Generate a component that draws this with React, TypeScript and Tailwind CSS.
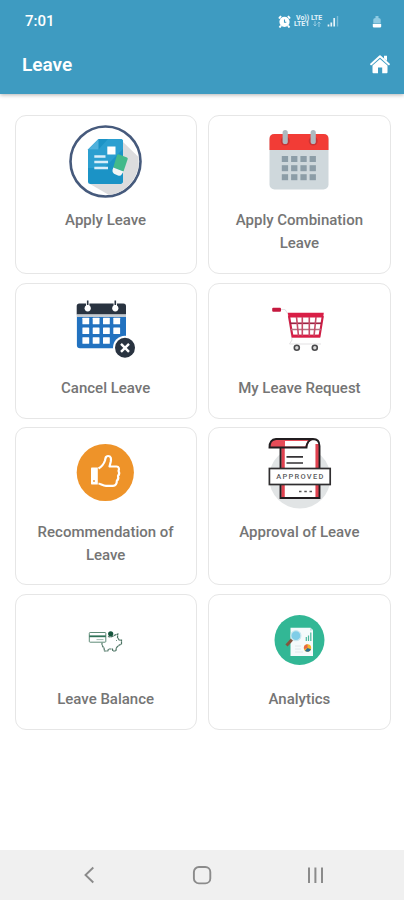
import * as React from 'react';

interface MenuItem {
  label: string;
  icon: React.ReactNode;
}

function ApplyIcon() {
  return (
    <svg viewBox="0 0 80 80" className="h-20 w-20">
      <circle cx="39.5" cy="39.5" r="35" fill="#fff" stroke="#465a7c" strokeWidth="2.6" />
      <path d="M57 20 L72.5 35 A33.700 33.700 0 0 1 43 73 L24 62 H57Z" fill="#dcdcde" />
      <path d="M32.5 17H54.5Q57 17 57 19.500V59.500Q57 62 54.500 62H24.500Q22 62 22 59.500V27.500Z" fill="#1b93c6" />
      <path d="M32.500 27.500L42 17H54.500Q57 17 57 19.500V27L38 46H22V27.500Z" fill="#2b9fd0" />
      <path d="M32.500 17V27.500H22Z" fill="#51b1dc" />
      <rect x="41.300" y="24.500" width="8.200" height="8" fill="#fff" />
      <path d="M28.300 34.500H39.500M28.300 40H42M28.300 46H42" stroke="#d9eef9" strokeWidth="2.400" />
      <path d="M52.500 32.200L61 35.400Q62 36 61.700 37L57.500 49.500L47.300 45.500L51 33Q51.500 32 52.500 32.200Z" fill="#43b98a" />
      <path d="M47.300 45.500L57.500 49.500L55.800 52.200Q54.500 54.500 52 53.500L48 51.800Q46 50.500 46.500 48Z" fill="#f3f5f5" />
    </svg>
  );
}

function CalendarIcon() {
  return (
    <svg viewBox="0 0 80 80" className="h-20 w-20">
      <rect x="10.500" y="12" width="59" height="55.500" rx="5" fill="#cfd8dc" />
      <path d="M10.500 28V17Q10.500 12 15.500 12H64.500Q69.500 12 69.500 17V28Z" fill="#f23c36" />
      {[26.200, 54.200].map((x) => (
        <g key={x}>
          <circle cx={x} cy="19" r="4.500" fill="#c93434" />
          <rect x={x - 2.600} y="8" width="5.200" height="14" rx="2.600" fill="#aebac0" />
        </g>
      ))}
      {[34, 43.200, 52.200].map((y) =>
        [22.800, 32.100, 41.400, 50.600].map((x) => (
          <rect key={`${x}-${y}`} x={x} y={y} width="6.300" height="6" fill="#8c9da7" />
        ))
      )}
    </svg>
  );
}

function CancelIcon() {
  return (
    <svg viewBox="0 0 80 80" className="h-20 w-20">
      <path d="M10.700 24.500V16Q10.700 13.400 13.300 13.400H57.400Q60 13.400 60 16V24.500Z" fill="#293340" />
      <rect x="10.700" y="24.500" width="49.300" height="2.500" fill="#c3c9d0" />
      <path d="M10.900 27H60V58.200H14Q10.900 58.200 10.900 55Z" fill="#2272c0" />
      {[21.700, 49.300].map((x) => (
        <g key={x}>
          <circle cx={x} cy="18.300" r="3.100" fill="#fff" />
          <path d={`M${x} 11V18`} stroke="#fff" strokeWidth="3.400" />
          <path d={`M${x} 10.500V15`} stroke="#293340" strokeWidth="1.600" />
        </g>
      ))}
      {[27.800, 37.500, 47.200].map((y, row) =>
        [16.400, 26.700, 37, 47.300].map((x, col) =>
          row === 2 && col === 3 ? null : (
            <rect key={`${x}-${y}`} x={x} y={y} width="6.800" height="6.500" rx="0.500" fill="#fff" />
          )
        )
      )}
      <circle cx="59" cy="57.800" r="12" fill="#fff" />
      <circle cx="59" cy="57.800" r="10" fill="#293340" />
      <path d="M55 53.800L63 61.800M63 53.800L55 61.800" stroke="#fff" strokeWidth="2.400" />
    </svg>
  );
}

function CartIcon() {
  return (
    <svg viewBox="0 0 80 80" className="h-20 w-20" fill="none">
      <path d="M21 19.500H26L29 24L33 50L30.500 54H62" stroke="#e3e1e3" strokeWidth="1" />
      <rect x="13.200" y="17.800" width="8.800" height="4" rx="1" fill="#c5193f" />
      <path d="M28.800 22.800H64.800L64.200 27.500H29.500Z" fill="#d91e46" />
      <path d="M30 26L33.500 46.500H60.500L63.800 26" stroke="#cf1f46" strokeWidth="2.100" />
      <path d="M31 33.300H62.500" stroke="#9b2444" strokeWidth="1.700" />
      <path d="M32 39.500H61.800" stroke="#b47484" strokeWidth="1.500" />
      <path d="M33 46H61" stroke="#d91e46" strokeWidth="2.800" />
      <path d="M37.500 27L39.500 46M43.300 27V46M50.300 27V46M57 27L55 46" stroke="#c64a66" strokeWidth="1.600" />
      {[37.800, 55.800].map((x) => (
        <circle key={x} cx={x} cy="57.800" r="2.500" fill="#d8d8d8" stroke="#4a4a4c" strokeWidth="1.600" />
      ))}
    </svg>
  );
}

function ThumbIcon() {
  return (
    <svg viewBox="0 0 80 80" className="h-20 w-20" fill="none">
      <circle cx="39.300" cy="38.500" r="28.600" fill="#ee9329" />
      <path d="M25.700 33.500H31.800V50.500H25.700Q25 50.500 25 49.500V34.500Q25 33.500 25.700 33.500Z" fill="#fff" />
      <circle cx="28" cy="47" r="0.900" fill="#ee9329" />
      <path
        d="M32.500 34.500C36 32.500 38 29.500 39 26.500C39.500 23.500 39.800 22 42 22C45 22 45.300 24.500 44.800 27.500L43.500 32.500H50.500C53 32.500 53.500 35 52.500 37C53.500 38.500 53.300 40.500 52 42C52.700 44 52 45.800 50.800 46.800C51 49.500 49.500 51.800 47 51.800H40C37 51.800 35 50 32.500 49.500"
        stroke="#fff"
        strokeWidth="2.200"
        strokeLinejoin="round"
      />
    </svg>
  );
}

function ApprovedIcon() {
  return (
    <svg viewBox="0 0 80 80" className="h-20 w-20" fill="none">
      <circle cx="40.800" cy="43.800" r="30.700" fill="#e1e4e5" />
      <path d="M21 7H54Q60.500 7 60.500 13V64H21Z" fill="#fff" />
      <path d="M24 14V64M58.200 10V64" stroke="#e0414f" strokeWidth="3.500" />
      <path d="M16 5.300H55Q49 7 48 13H11Q11 6 16 5.300Z" fill="#e64c58" />
      <path d="M26 7H49L46 12.500H26Z" fill="#fff" />
      <path d="M21.500 13.500V64H60.500V12Q60.500 5 54 5H17Q10.500 5.500 10.500 13.500H47.500Q48 6 54 5" stroke="#211d20" strokeWidth="1.900" />
      <path d="M27.500 22.800H44M27.500 29H44" stroke="#343234" strokeWidth="1.700" />
      <rect x="10.400" y="34.500" width="60.800" height="16" fill="#fff" stroke="#302e30" strokeWidth="1.700" />
      <text
        x="40.800"
        y="45.200"
        textAnchor="middle"
        textLength="47"
        fontSize="7.500"
        fontWeight="500"
        fontFamily="Roboto, sans-serif"
        fill="#5b5b5e"
      >
        APPROVED
      </text>
      <path d="M40 57.500H42.500M45.300 57.500H47.800M50.500 57.500H53" stroke="#555" strokeWidth="1.600" />
    </svg>
  );
}

function BalanceIcon() {
  return (
    <svg viewBox="0 0 80 80" className="h-20 w-20" fill="none">
      <rect x="23.300" y="31.500" width="16.500" height="9.700" rx="0.800" fill="#fff" stroke="#5f8b78" strokeWidth="1" />
      <path d="M23.300 35.300H39.800" stroke="#2f7257" strokeWidth="1.800" />
      <path d="M30.500 38.600H37.500" stroke="#8daa9e" strokeWidth="0.800" />
      <path
        d="M42 35.500C44 36.500 47 35.500 48.500 34.300L51.800 33L51.500 36.500L53.300 39.200H55.500V43L53 44.300L50.500 46.500L49.800 50H46.800L46.500 48H42.500L41.800 50H38.500L38 47C36.300 45.500 35.800 43.500 36 41.800"
        stroke="#4d7464"
        strokeWidth="1.200"
        strokeDasharray="2.600 0.400"
      />
      <circle cx="44.700" cy="32.800" r="2.600" fill="#17563d" />
      <circle cx="50.500" cy="39.500" r="0.500" fill="#4d7464" />
    </svg>
  );
}

function AnalyticsIcon() {
  return (
    <svg viewBox="0 0 80 80" className="h-20 w-20" fill="none">
      <circle cx="40.500" cy="39" r="25" fill="#32b795" />
      <path d="M31.500 26.700H51.500L54 29V55H31.500Z" fill="#f5fafb" />
      <path d="M51 26.700V29.500H54Z" fill="#c4dfe1" />
      <path d="M47.300 40V36M49.500 40V34.500M51.800 40V31.500" stroke="#4ab79c" strokeWidth="1.200" />
      <path d="M36 45H42M36 48H42M36 51H44" stroke="#dce5e8" strokeWidth="0.900" />
      <circle cx="48.500" cy="47" r="3.700" fill="#f3b62e" />
      <path d="M48.500 47V43.300A3.700 3.700 0 0 0 45 48Z" fill="#e76647" />
      <path d="M48.500 47L52 48.200A3.700 3.700 0 0 1 46 49.800Z" fill="#296d92" />
      <path d="M33 38.500L27.500 44.500" stroke="#84543d" strokeWidth="3" />
      <circle cx="36.900" cy="34.700" r="5" fill="#80cde7" stroke="#c9e7ef" strokeWidth="1.200" />
    </svg>
  );
}

const items: MenuItem[] = [
  { label: 'Apply Leave', icon: <ApplyIcon /> },
  { label: 'Apply Combination Leave', icon: <CalendarIcon /> },
  { label: 'Cancel Leave', icon: <CancelIcon /> },
  { label: 'My Leave Request', icon: <CartIcon /> },
  { label: 'Recommendation of Leave', icon: <ThumbIcon /> },
  { label: 'Approval of Leave', icon: <ApprovedIcon /> },
  { label: 'Leave Balance', icon: <BalanceIcon /> },
  { label: 'Analytics', icon: <AnalyticsIcon /> },
];

function StatusBar() {
  return (
    <div className="flex h-[42px] items-center pl-[25px] pr-[22px]">
      <span className="pt-[1px] text-[15px] font-medium leading-none">7:01</span>
      <div className="ml-auto flex items-center">
        {/* Alarm */}
        <svg viewBox="0 0 13 13" className="h-[13px] w-[13px]" fill="none">
          <path d="M1 3.500L3 1M12 3.500L10 1M3 10.500L1.500 12.500M10 10.500L11.500 12.500" stroke="#fff" strokeWidth="2" />
          <circle cx="6.500" cy="6.800" r="5.100" fill="#fff" />
          <path d="M6.500 4.500V7.200H8.300" stroke="#3e9bc1" strokeWidth="1.100" />
        </svg>
        <div className="ml-[3px] flex w-[31px] flex-col text-[7px] font-bold leading-[6.500px] text-[#e4f3fa]">
          <span className="whitespace-nowrap pl-[2px]">Vo)) LTE</span>
          <span className="flex items-center whitespace-nowrap">
            LTE1
            <svg viewBox="0 0 8 6" className="ml-[4px] h-[6px] w-[8px]" fill="none" stroke="#94cbe2" strokeWidth="1">
              <path d="M2 0V5M0.500 3.500L2 5L3.500 3.500M6 6V1M4.500 2.500L6 1L7.500 2.500" />
            </svg>
          </span>
        </div>
        <svg viewBox="0 0 12 12" className="ml-[2px] h-3 w-3" fill="none">
          <path d="M1.500 11.500V9.500M4.300 11.500V7.500M7.200 11.500V3" stroke="#e8f5fa" strokeWidth="1.700" />
          <path d="M10.500 11.500V1" stroke="#7dbdd8" strokeWidth="1.400" />
        </svg>
        {/* Battery */}
        <svg viewBox="0 0 10 13" className="ml-[33px] h-[13px] w-[10px]">
          <path d="M1.300 8V4.500Q1.300 3 3.500 3V1H6.500V3Q8.700 3 8.700 4.500V8Z" fill="#8fcbe3" />
          <rect x="0.800" y="8.700" width="8.400" height="3.700" rx="0.800" fill="#fff" />
        </svg>
      </div>
    </div>
  );
}

function Header() {
  return (
    <header className="relative z-10 h-[94px] bg-[#3e9bc1] text-white shadow-[0_1px_4px_rgba(0,0,0,0.3)]">
      <StatusBar />
      <div className="flex h-[44px] items-center justify-between pl-[22px] pr-[14px]">
        <h1 className="text-[19px] font-semibold leading-none">Leave</h1>
        <svg viewBox="0 0 20 20" className="h-5 w-5" fill="none">
          <path d="M14 1.700H17V7L14 4.500Z" fill="#fff" />
          <path d="M1.200 10.200L10 2.300L18.800 10.200" stroke="#fff" strokeWidth="2.100" strokeLinecap="round" strokeLinejoin="round" />
          <path d="M10 4.900L17.500 11.500V18.300Q17.500 19.200 16.600 19.200H12.200V13.500H8V19.200H3.400Q2.500 19.200 2.500 18.300V11.500Z" fill="#fff" />
        </svg>
      </div>
    </header>
  );
}

function MenuCard({ label, icon }: MenuItem) {
  return (
    <button className="flex flex-col items-center rounded-[11px] border border-[#e6e6e6] bg-white px-4 pt-[6px]">
      {icon}
      <span className="mt-[7px] text-[15px] font-medium leading-[22.500px] text-[#757575]">
        {label}
      </span>
    </button>
  );
}

function NavBar() {
  return (
    <nav className="flex h-[50px] items-center bg-[#f0f0f0] pl-[79px] pr-[79px]">
      <div className="flex flex-1 items-center justify-between">
        <svg viewBox="0 0 20 20" className="h-5 w-5" fill="none" stroke="#8b8b8b" strokeWidth="1.900">
          <path d="M14.300 2.500L6.500 10L14.300 17.500" />
        </svg>
        <svg viewBox="0 0 20 20" className="h-5 w-5" fill="none" stroke="#8b8b8b" strokeWidth="1.900">
          <rect x="1.900" y="2" width="16.400" height="16.400" rx="5" />
        </svg>
        <svg viewBox="0 0 20 20" className="h-5 w-5" fill="none" stroke="#8b8b8b" strokeWidth="2">
          <path d="M4 2.500V18M10.400 2.500V18M17 2.500V18" />
        </svg>
      </div>
    </nav>
  );
}

export default function App() {
  return (
    <div className="flex h-[900px] w-[404px] flex-col overflow-hidden bg-white font-['Roboto',sans-serif]">
      <Header />
      <main className="flex-1 pl-[14.500px] pr-[13.500px] pt-[21px]">
        <div className="grid grid-cols-2 grid-rows-[159px_136px_158px_136px] gap-x-[11.500px] gap-y-[8.500px]">
          {items.map((item) => (
            <MenuCard key={item.label} {...item} />
          ))}
        </div>
      </main>
      <NavBar />
    </div>
  );
}
